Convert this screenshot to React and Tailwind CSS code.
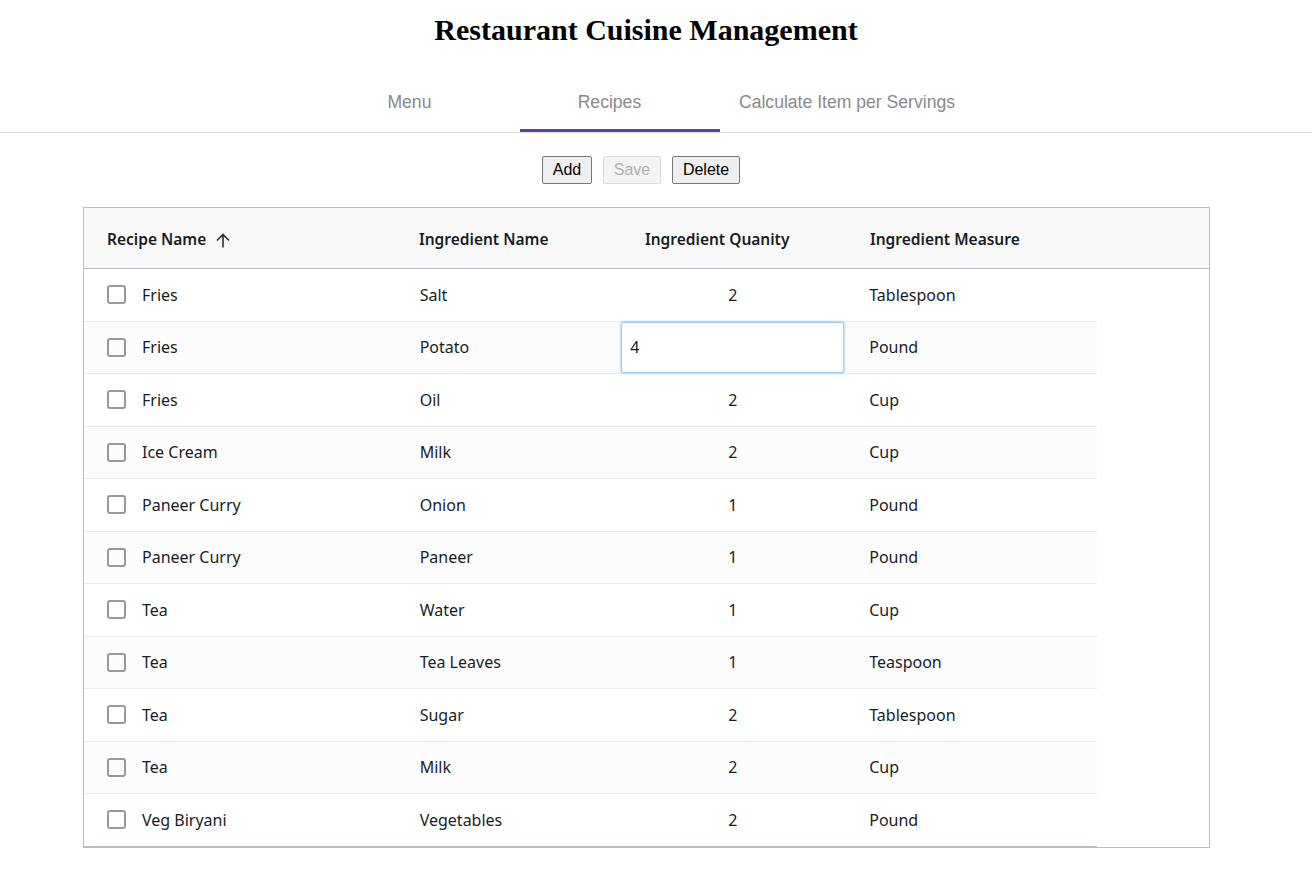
import React, { useState } from "react";

const rows = [
  { recipe: "Fries", ingredient: "Salt", qty: 2, measure: "Tablespoon" },
  { recipe: "Fries", ingredient: "Potato", qty: 4, measure: "Pound", editing: true },
  { recipe: "Fries", ingredient: "Oil", qty: 2, measure: "Cup" },
  { recipe: "Ice Cream", ingredient: "Milk", qty: 2, measure: "Cup" },
  { recipe: "Paneer Curry", ingredient: "Onion", qty: 1, measure: "Pound" },
  { recipe: "Paneer Curry", ingredient: "Paneer", qty: 1, measure: "Pound" },
  { recipe: "Tea", ingredient: "Water", qty: 1, measure: "Cup" },
  { recipe: "Tea", ingredient: "Tea Leaves", qty: 1, measure: "Teaspoon" },
  { recipe: "Tea", ingredient: "Sugar", qty: 2, measure: "Tablespoon" },
  { recipe: "Tea", ingredient: "Milk", qty: 2, measure: "Cup" },
  { recipe: "Veg Biryani", ingredient: "Vegetables", qty: 2, measure: "Pound" },
];

const tabs = [
  { name: "Menu", cls: "w-[200px] pr-[21px]" },
  { name: "Recipes", cls: "w-[200px] pr-[21px]" },
  { name: "Calculate Item per Servings", cls: "px-[19px]" },
];

function App() {
  const [tab, setTab] = useState("Recipes");

  return (
    <div className="min-h-screen bg-white">
      <h1 className="pt-[7px] pr-[20px] text-center text-[30px] font-bold text-black" style={{ fontFamily: '"Liberation Serif", serif' }}>
        Restaurant Cuisine Management
      </h1>

      {/* Tabs */}
      <div className="mt-[23px] flex justify-center border-b border-[#e0e0e0] pr-[18px]" style={{ fontFamily: '"Liberation Sans", Arial, sans-serif' }}>
        <div className="flex">
          {tabs.map((t) => (
            <button
              key={t.name}
              onClick={() => setTab(t.name)}
              className={
                "h-[57px] pt-[1px] text-[17.6px] text-[#8a8a8a] border-b-[3px] " +
                t.cls +
                " " +
                (tab === t.name ? "border-[#673ab7]" : "border-transparent")
              }
            >
              {t.name}
            </button>
          ))}
        </div>
      </div>

      {/* Action buttons */}
      <div className="mt-[23px] flex justify-center gap-[11px] pr-[30px]" style={{ fontFamily: '"Liberation Sans", Arial, sans-serif' }}>
        <button className="h-[28px] w-[50px] rounded-[2px] border border-[#767676] bg-[#efefef] text-[16px] text-black">Add</button>
        <button disabled className="h-[28px] w-[58px] rounded-[2px] border border-[#d9d9d9] bg-[#f4f4f4] text-[16px] text-[#b0b0b0]">Save</button>
        <button className="h-[28px] w-[68px] rounded-[2px] border border-[#767676] bg-[#efefef] text-[16px] text-black">Delete</button>
      </div>

      {/* Grid */}
      <div
        className="mx-[83px] mt-[23px] w-[1127px] border border-[#babfc7] text-[#181d1f]"
        style={{ fontFamily: '"Noto Sans", "Open Sans", sans-serif' }}
      >
        <div className="flex h-[61px] items-center border-b border-[#babfc7] bg-[#f8f8f8] pt-[3px] text-[15.5px] font-semibold">
          <div className="flex w-[312px] items-center pl-[23px]">
            Recipe Name
            <svg className="ml-[10px] mt-[1px]" width="14" height="15" viewBox="0 0 14 15" fill="none" stroke="#2a2e30" strokeWidth="1.6">
              <path d="M7 14.5V1.5M1 7.5L7 1.5l6 6" />
            </svg>
          </div>
          <div className="w-[225px] pl-[23px]">Ingredient Name</div>
          <div className="w-[225px] pl-[24px]">Ingredient Quanity</div>
          <div className="w-[252px] pl-[24px]">Ingredient Measure</div>
        </div>

        <div className="text-[16px]">
          {rows.map((r, i) => (
            <div
              key={i}
              className={
                "flex h-[52.5px] w-[1013px] items-center border-b " +
                (i === rows.length - 1 ? "border-[#babfc7] " : "border-[#ebebeb] ") +
                (i % 2 === 1 ? "bg-[#fcfcfc]" : "bg-white")
              }
            >
              <div className="flex w-[312px] items-center pl-[23px]">
                <span className="mr-[16px] h-[19px] w-[19px] rounded-[3px] border-2 border-[#999]" />
                {r.recipe}
              </div>
              <div className="w-[225px] pl-[24px]">{r.ingredient}</div>
              <div className="flex w-[225px] items-center justify-center">
                {r.editing ? (
                  <div className="flex h-[51px] w-[223px] items-center rounded-[3px] border border-[#9fd0f5] bg-white pl-[8px] shadow-[0_0_2px_1px_rgba(33,150,243,0.3)]">
                    {r.qty}
                  </div>
                ) : (
                  r.qty
                )}
              </div>
              <div className="w-[252px] pl-[24px]">{r.measure}</div>
            </div>
          ))}
        </div>
      </div>
    </div>
  );
}

export default App;
